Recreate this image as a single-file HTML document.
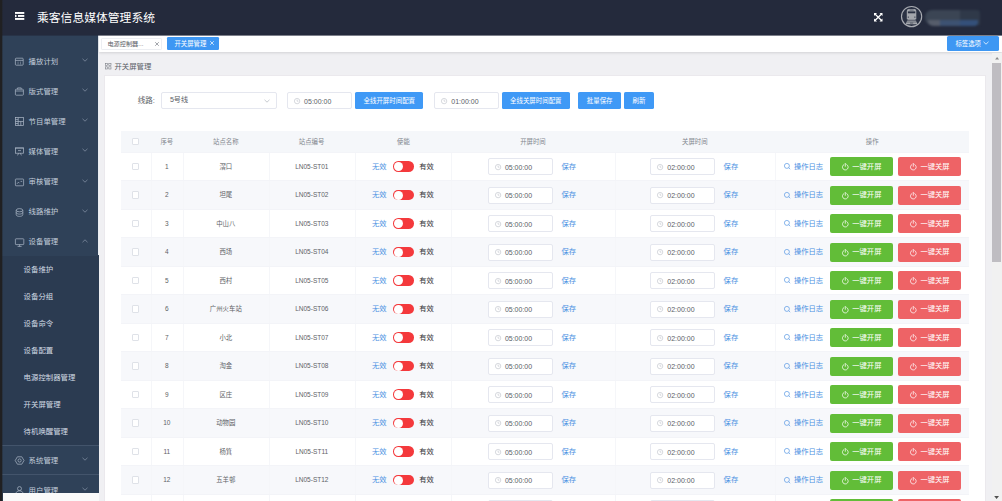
<!DOCTYPE html><html lang="zh-CN"><head><meta charset="utf-8"><title>乘客信息媒体管理系统</title><style>
*{box-sizing:border-box;margin:0;padding:0}
html,body{width:1002px;height:501px;overflow:hidden;background:#f0f0f3}
body{position:relative;font-family:"Liberation Sans", "Noto Sans CJK SC", sans-serif;color:#606266;font-size:6.4px;line-height:1}
.abs{position:absolute}
.t{position:absolute;white-space:nowrap;transform:translateY(-50%)}
.tc{position:absolute;white-space:nowrap;transform:translate(-50%,-50%)}
#hdr{position:absolute;left:0;top:0;width:1002px;height:35px;background:#242a3c}
#strip{position:absolute;left:0;top:0;width:3px;height:501px;background:linear-gradient(to right,#202022 0,#202022 2px,rgba(32,32,34,.35) 2px);z-index:9}
#side{position:absolute;left:0;top:35px;width:99.1px;height:466px;background:#2f4158;overflow:hidden}
#side .sub{position:absolute;left:0;width:99.1px;background:#2b3b51}
.mi{position:absolute;left:0;width:98.6px;color:#c3cedb;font-size:7.4px}
.mi .t{left:28.6px}
.si{position:absolute;left:0;width:98.6px;color:#d3dbe5;font-size:7.4px}
.si .t{left:23.6px}
#tabs{position:absolute;left:99.1px;top:35px;width:903px;height:16.7px;background:#fff;box-shadow:0 .8px 2.6px rgba(0,0,0,.13)}
.tab{position:absolute;top:2.6px;height:12px;border-radius:1.2px;font-size:6.2px}
#card{position:absolute;left:104px;top:75px;width:882px;height:430px;background:#fff;border:1px solid #ebe9ed}
.inp{position:absolute;background:#fff;border:0.55px solid #e5e7ef;border-radius:2px;color:#606266;font-size:6.8px}
.btn{position:absolute;background:#3f99f6;border-radius:1.6px;color:#fff;font-size:6.45px;text-align:center}
.row{position:absolute;left:120.8px;width:848.4px;height:28.5px;border-bottom:0.55px solid #f3f4f8}
.row.s{background:#f7f8fb}
.row.h{background:#f5f7fa;color:#83878e}
.vl{position:absolute;top:0;width:0.55px;height:100%;background:#f5f6f9}
.cb{position:absolute;width:7.2px;height:7.2px;border:0.55px solid #dfe2e8;border-radius:1px;background:#fff}
.lnk{color:#4a90e2;font-size:7.3px}
.tc.la{font-size:6.5px;transform:translate(-50%,-50%) scale(1,1.13)}
.t.la{transform:translateY(-50%) scale(1,1.12);transform-origin:0 50%}
.sw{position:absolute;width:21.4px;height:10.6px;border-radius:5.3px;background:#f4393c}
.sw:after{content:"";position:absolute;left:0.8px;top:0.8px;width:9px;height:9px;border-radius:50%;background:#fff}
.gb{position:absolute;height:19.4px;width:63px;border-radius:2px;color:#fff;font-size:7.3px}
svg{position:absolute;overflow:visible}
</style></head><body>
<div id="hdr">
<svg style="left:15px;top:12.1px" width="9.3" height="7.9" viewBox="0 0 9.3 7.9"><g fill="#fff"><rect x="0" y="0" width="9.3" height="1.9"/><rect x="3" y="3" width="6.3" height="1.9"/><rect x="0" y="6" width="9.3" height="1.9"/><path d="M0 2.5L2.3 3.95L0 5.4Z"/></g></svg>
<div class="t" style="left:37px;top:19.1px;color:#fff;font-size:11.8px">乘客信息媒体管理系统</div>
<svg style="left:874.4px;top:12.8px" width="8.5" height="8.5" viewBox="0 0 9 9"><g stroke="#fff" stroke-width="1.3" fill="none"><path d="M1 1L8 8M8 1L1 8"/></g><g fill="#fff"><path d="M0 0h3.2L0 3.2zM9 0v3.2L5.8 0zM0 9v-3.2L3.2 9zM9 9h-3.2L9 5.8z"/></g></svg>
<svg style="left:900.5px;top:6.2px" width="21.2" height="21.2" viewBox="0 0 21.2 21.2"><circle cx="10.6" cy="10.6" r="10.1" fill="#2a3143" stroke="#a9acb2" stroke-width="1.15"/><g fill="#a3a6ac"><path d="M7.8 3h5.5a2 2 0 0 1 2 2v8.2H5.8V5a2 2 0 0 1 2-2z"/><path d="M6.8 13.2h7.5l.5 1.1H6.3zM6 14.8h9.1l.4 1H5.6zM5.3 16.3h10.5l.5 1.9H4.8z"/></g><g fill="#2a3143"><rect x="6.9" y="5.4" width="7.4" height="1.9"/><rect x="8.5" y="3.7" width="4.2" height=".6"/><circle cx="7.3" cy="11.1" r=".65"/><circle cx="13.9" cy="11.1" r=".65"/><rect x="9" y="16.3" width="3.2" height="1.9" opacity=".35"/></g></svg>
<div class="abs" style="left:920px;top:5px;width:70px;height:26px;filter:blur(1px)"><div class="abs" style="left:5.2px;top:5.4px;width:36px;height:15px;background:#3b4554;border-radius:7px 0 0 7px"></div><div class="abs" style="left:40.4px;top:5px;width:19.6px;height:15.4px;background:#2f3949;border-radius:0 3px 0 0"></div><div class="abs" style="left:8px;top:14.6px;width:12px;height:6px;background:#565d6b;border-radius:0 0 0 5px"></div><div class="abs" style="left:19.7px;top:14.9px;width:20.3px;height:5.7px;background:#3d5272"></div><div class="abs" style="left:39.9px;top:14.9px;width:18.4px;height:5.7px;background:#34507a;border-radius:0 0 4px 0"></div></div>
</div>
<div id="side">
<div class="sub" style="top:221.4px;height:188.3px"></div>
<div class="mi" style="top:26.6px;height:0">
<svg style="left:14.7px;top:-4.5px" width="9" height="9" viewBox="0 0 9 9"><g fill="none" stroke="#aeb9c8" stroke-width=".7"><rect x=".4" y="1.2" width="7.8" height="7" rx=".8"/><path d="M.4 3.4h7.8"/><path d="M2.6 5.2h.9M5.1 5.2h.9M2.6 6.8h.9M5.1 6.8h.9" /></g></svg>
<div class="t" style="top:0">播放计划</div>
<svg style="left:85.2px;top:-1.5px" width="1" height="1"><path d="M-2.5 -1.2 L0 1.2 L2.5 -1.2" fill="none" stroke="#8492a6" stroke-width=".75"/></svg>
</div>
<div class="mi" style="top:56.7px;height:0">
<svg style="left:14.7px;top:-4.5px" width="9" height="9" viewBox="0 0 9 9"><g fill="none" stroke="#aeb9c8" stroke-width=".7"><rect x=".4" y="2.2" width="8" height="6" rx=".8"/><path d="M2.6 2.2V.9h3.6v1.3"/><path d="M.4 4h8"/></g></svg>
<div class="t" style="top:0">版式管理</div>
<svg style="left:85.2px;top:-1.5px" width="1" height="1"><path d="M-2.5 -1.2 L0 1.2 L2.5 -1.2" fill="none" stroke="#8492a6" stroke-width=".75"/></svg>
</div>
<div class="mi" style="top:86.8px;height:0">
<svg style="left:14.7px;top:-4.5px" width="9" height="9" viewBox="0 0 9 9"><g fill="none" stroke="#aeb9c8" stroke-width=".7"><rect x=".4" y=".6" width="8" height="7.8"/><path d="M3.2 .6v7.8M.4 4.5h8M5.8 4.5v3.9M.4 2.6h2.8M.4 6.5h2.8"/></g></svg>
<div class="t" style="top:0">节目单管理</div>
<svg style="left:85.2px;top:-1.5px" width="1" height="1"><path d="M-2.5 -1.2 L0 1.2 L2.5 -1.2" fill="none" stroke="#8492a6" stroke-width=".75"/></svg>
</div>
<div class="mi" style="top:116.9px;height:0">
<svg style="left:14.7px;top:-4.5px" width="9" height="9" viewBox="0 0 9 9"><g fill="none" stroke="#aeb9c8" stroke-width=".7"><rect x=".6" y="1" width="7.8" height="5.2"/><path d="M0 1h9M2.6 8.4l1-2.2M6.4 8.4l-1-2.2M3 3.6h3"/></g></svg>
<div class="t" style="top:0">媒体管理</div>
<svg style="left:85.2px;top:-1.5px" width="1" height="1"><path d="M-2.5 -1.2 L0 1.2 L2.5 -1.2" fill="none" stroke="#8492a6" stroke-width=".75"/></svg>
</div>
<div class="mi" style="top:147px;height:0">
<svg style="left:14.7px;top:-4.5px" width="9" height="9" viewBox="0 0 9 9"><g fill="none" stroke="#aeb9c8" stroke-width=".7"><rect x=".4" y="1" width="8.2" height="6.8" rx=".6"/><path d="M2 5.8l1.4-1.6 1 1M5.6 3.4h1.6"/></g></svg>
<div class="t" style="top:0">审核管理</div>
<svg style="left:85.2px;top:-1.5px" width="1" height="1"><path d="M-2.5 -1.2 L0 1.2 L2.5 -1.2" fill="none" stroke="#8492a6" stroke-width=".75"/></svg>
</div>
<div class="mi" style="top:177.1px;height:0">
<svg style="left:14.7px;top:-4.5px" width="9" height="9" viewBox="0 0 9 9"><g fill="none" stroke="#aeb9c8" stroke-width=".7"><ellipse cx="4.5" cy="2.2" rx="3.3" ry="1.6"/><path d="M1.2 2.2v4.6c0 .9 1.5 1.6 3.3 1.6s3.3-.7 3.3-1.6V2.2M1.2 4.5c0 .9 1.5 1.6 3.3 1.6s3.3-.7 3.3-1.6"/></g></svg>
<div class="t" style="top:0">线路维护</div>
<svg style="left:85.2px;top:-1.5px" width="1" height="1"><path d="M-2.5 -1.2 L0 1.2 L2.5 -1.2" fill="none" stroke="#8492a6" stroke-width=".75"/></svg>
</div>
<div class="mi" style="top:207.2px;height:0">
<svg style="left:14.7px;top:-4.5px" width="9" height="9" viewBox="0 0 9 9"><g fill="none" stroke="#aeb9c8" stroke-width=".7"><rect x=".4" y=".8" width="8.4" height="5.8" rx=".6"/><path d="M2.6 8.4h4M4.6 6.6v1.8"/></g></svg>
<div class="t" style="top:0">设备管理</div>
<svg style="left:85.2px;top:-1.5px" width="1" height="1"><path d="M-2.5 1.2 L0 -1.2 L2.5 1.2" fill="none" stroke="#8492a6" stroke-width=".75"/></svg>
</div>
<div class="si" style="top:235.35px;height:0"><div class="t" style="top:0">设备维护</div></div>
<div class="si" style="top:262.25px;height:0"><div class="t" style="top:0">设备分组</div></div>
<div class="si" style="top:289.15px;height:0"><div class="t" style="top:0">设备命令</div></div>
<div class="si" style="top:316.05px;height:0"><div class="t" style="top:0">设备配置</div></div>
<div class="si" style="top:342.95px;height:0"><div class="t" style="top:0">电源控制器管理</div></div>
<div class="si" style="top:369.85px;height:0"><div class="t" style="top:0">开关屏管理</div></div>
<div class="si" style="top:396.75px;height:0"><div class="t" style="top:0">待机唤醒管理</div></div>
<div class="abs" style="left:0;top:409.7px;width:98.6px;height:.55px;background:#43546b"></div>
<div class="mi" style="top:425.6px;height:0">
<svg style="left:14.7px;top:-4.5px" width="9" height="9" viewBox="0 0 9 9"><g fill="none" stroke="#aeb9c8" stroke-width=".7"><path d="M2.4.8h4.4l2.2 3.7-2.2 3.7H2.4L.2 4.5z"/><circle cx="4.6" cy="4.5" r="1.6"/></g></svg>
<div class="t" style="top:0">系统管理</div>
<svg style="left:85.2px;top:-1.5px" width="1" height="1"><path d="M-2.5 -1.2 L0 1.2 L2.5 -1.2" fill="none" stroke="#8492a6" stroke-width=".75"/></svg>
</div>
<div class="abs" style="left:0;top:439.4px;width:98.6px;height:.55px;background:#43546b"></div>
<div class="mi" style="top:455.6px;height:0">
<svg style="left:14.7px;top:-4.5px" width="9" height="9" viewBox="0 0 9 9"><g fill="none" stroke="#aeb9c8" stroke-width=".7"><circle cx="4.5" cy="2.6" r="2"/><path d="M.6 8.6c0-2.4 1.7-3.8 3.9-3.8s3.9 1.4 3.9 3.8"/></g></svg>
<div class="t" style="top:0">用户管理</div>
<svg style="left:85.2px;top:-1.5px" width="1" height="1"><path d="M-2.5 -1.2 L0 1.2 L2.5 -1.2" fill="none" stroke="#8492a6" stroke-width=".75"/></svg>
</div>
<div class="abs" style="left:98.1px;top:0;width:1.1px;height:220.3px;background:#e9edf2"></div>
<div class="abs" style="left:2.6px;top:458px;width:96px;height:9px;background:#fafafa"></div>
</div>
<div id="tabs">
<div class="tab" style="left:2.1px;width:61px;background:#fff;border:.55px solid #eceef2;color:#5a5e66"><div class="t" style="left:5.2px;top:5.8px">电源控制器...</div><svg style="left:55px;top:5.6px" width="1" height="1"><path d="M-1.8 -1.8L1.8 1.8M1.8 -1.8L-1.8 1.8" stroke="#7a7e86" stroke-width=".7" fill="none"/></svg></div>
<div class="tab" style="left:68.3px;top:2.2px;width:51.5px;height:12.6px;background:#3e97f3;color:#fff;font-size:6.36px"><div class="t" style="left:7.1px;top:6.4px">开关屏管理</div><svg style="left:45.1px;top:6.2px" width="1" height="1"><path d="M-1.8 -1.8L1.8 1.8M1.8 -1.8L-1.8 1.8" stroke="#fff" stroke-width=".7" fill="none"/></svg></div>
<div class="btn" style="left:848.1px;top:1.3px;width:51.8px;height:14.6px;background:#3e97f3;font-size:6.4px"><div class="t" style="left:8.2px;top:7.3px">标签选项</div><svg style="left:38.6px;top:7.2px" width="1" height="1"><path d="M-2.5 -1.2 L0 1.2 L2.5 -1.2" fill="none" stroke="#fff" stroke-width=".75"/></svg></div>
</div>
<svg style="left:105.3px;top:63.4px" width="6.4" height="6.4" viewBox="0 0 6.4 6.4"><g fill="none" stroke="#7a7e86" stroke-width=".6"><rect x=".3" y=".3" width="2.2" height="2.2"/><rect x="3.8" y=".3" width="2.2" height="2.2"/><rect x=".3" y="3.8" width="2.2" height="2.2"/><rect x="3.8" y="3.8" width="2.2" height="2.2"/></g></svg>
<div class="t" style="left:114.4px;top:66.8px;font-size:7.4px;color:#5a5e66">开关屏管理</div>
<div id="card"></div>
<div class="t" style="left:137.8px;top:101.3px;font-size:7.5px;color:#606266">线路:</div>
<div class="inp" style="left:161.3px;top:92.4px;width:115.3px;height:17px"></div>
<div class="t" style="left:169.9px;top:101.3px;font-size:7.1px;color:#5a5e66">5号线</div>
<svg style="left:267.4px;top:101.3px" width="1" height="1"><path d="M-2.5 -1.2 L0 1.2 L2.5 -1.2" fill="none" stroke="#b4b8c0" stroke-width=".75"/></svg>
<div class="inp" style="left:287.2px;top:92.4px;width:65.2px;height:17px"></div><svg style="left:293.9px;top:97.8px" width="6.2" height="6.2" viewBox="0 0 6.2 6.2"><g fill="none" stroke="#bcc0c8" stroke-width=".6"><circle cx="3.1" cy="3.1" r="2.7"/><path d="M3.1 1.5v1.7h1.3"/></g></svg><div class="t la" style="left:304.1px;top:101px;font-size:7px;color:#5a5e66">05:00:00</div>
<div class="btn" style="left:355.2px;top:92.4px;width:68.2px;height:17px"><div class="tc" style="left:50%;top:50%">全线开屏时间配置</div></div>
<div class="inp" style="left:434.4px;top:92.4px;width:64.2px;height:17px"></div><svg style="left:441.1px;top:97.8px" width="6.2" height="6.2" viewBox="0 0 6.2 6.2"><g fill="none" stroke="#bcc0c8" stroke-width=".6"><circle cx="3.1" cy="3.1" r="2.7"/><path d="M3.1 1.5v1.7h1.3"/></g></svg><div class="t la" style="left:451.3px;top:101px;font-size:7px;color:#5a5e66">01:00:00</div>
<div class="btn" style="left:501.5px;top:92.4px;width:68.6px;height:17px"><div class="tc" style="left:50%;top:50%">全线关屏时间配置</div></div>
<div class="btn" style="left:578.2px;top:92.4px;width:43px;height:17px"><div class="tc" style="left:50%;top:50%">批量保存</div></div>
<div class="btn" style="left:624.2px;top:92.4px;width:29.6px;height:17px"><div class="tc" style="left:50%;top:50%">刷新</div></div>
<div class="row h" style="top:130.5px;height:22px">
<div class="cb" style="left:11.5px;top:7.1px"></div>
<div class="tc" style="left:46px;top:11.3px">序号</div>
<div class="tc" style="left:105px;top:11.3px">站点名称</div>
<div class="tc" style="left:190.8px;top:11.3px">站点编号</div>
<div class="tc" style="left:282.6px;top:11.3px">使能</div>
<div class="tc" style="left:412.2px;top:11.3px">开屏时间</div>
<div class="tc" style="left:574px;top:11.3px">关屏时间</div>
<div class="tc" style="left:751.4px;top:11.3px">操作</div>
</div>
<div class="row" style="top:152.5px">
<div class="vl" style="left:29.9px"></div><div class="vl" style="left:62.2px"></div><div class="vl" style="left:147.8px"></div><div class="vl" style="left:233.9px"></div><div class="vl" style="left:330.4px"></div><div class="vl" style="left:494px"></div><div class="vl" style="left:654.4px"></div>
<div class="cb" style="left:11.2px;top:10.35px"></div>
<div class="tc la" style="left:46px;top:14.25px">1</div>
<div class="tc" style="left:105px;top:14.25px">滘口</div>
<div class="tc la" style="left:191px;top:14.25px">LN05-ST01</div>
<div class="t lnk" style="left:251.2px;top:14.25px">无效</div>
<div class="sw" style="left:272px;top:8.75px"></div>
<div class="t" style="left:298.4px;top:14.25px;font-size:7.3px;color:#303133">有效</div>
<div class="inp" style="left:367.2px;top:5.65px;width:64.6px;height:17.2px"></div><svg style="left:373.9px;top:11.15px" width="6.2" height="6.2" viewBox="0 0 6.2 6.2"><g fill="none" stroke="#bcc0c8" stroke-width=".6"><circle cx="3.1" cy="3.1" r="2.7"/><path d="M3.1 1.5v1.7h1.3"/></g></svg><div class="t la" style="left:384.1px;top:14.35px;font-size:7px;color:#5a5e66">05:00:00</div>
<div class="t lnk" style="left:440.6px;top:14.25px">保存</div>
<div class="inp" style="left:529.6px;top:5.65px;width:64.6px;height:17.2px"></div><svg style="left:536.3px;top:11.15px" width="6.2" height="6.2" viewBox="0 0 6.2 6.2"><g fill="none" stroke="#bcc0c8" stroke-width=".6"><circle cx="3.1" cy="3.1" r="2.7"/><path d="M3.1 1.5v1.7h1.3"/></g></svg><div class="t la" style="left:546.5px;top:14.35px;font-size:7px;color:#5a5e66">02:00:00</div>
<div class="t lnk" style="left:602.8px;top:14.25px">保存</div>
<svg style="left:663.2px;top:10.95px" width="6.6" height="6.6" viewBox="0 0 6.6 6.6"><g fill="none" stroke="#4a90e2" stroke-width=".65"><circle cx="2.9" cy="2.9" r="2.5"/><path d="M4.7 4.7l1.5 1.5"/></g></svg>
<div class="t lnk" style="left:673.2px;top:14.25px">操作日志</div>
<div class="gb" style="left:709.2px;top:4.55px;background:#62bd38"><svg style="left:11.8px;top:6.1px" width="6.6" height="6.8" viewBox="0 0 6.6 6.8"><g fill="none" stroke="#fff" stroke-width=".75" stroke-linecap="round"><path d="M1.9 1.5a2.9 2.9 0 1 0 2.8 0"/><path d="M3.3 .4v2.9"/></g></svg><div class="t" style="left:22.3px;top:9.7px">一键开屏</div></div>
<div class="gb" style="left:777.4px;top:4.55px;background:#ee6366"><svg style="left:11.8px;top:6.1px" width="6.6" height="6.8" viewBox="0 0 6.6 6.8"><g fill="none" stroke="#fff" stroke-width=".75" stroke-linecap="round"><path d="M1.9 1.5a2.9 2.9 0 1 0 2.8 0"/><path d="M3.3 .4v2.9"/></g></svg><div class="t" style="left:22.3px;top:9.7px">一键关屏</div></div>
</div>
<div class="row s" style="top:181px">
<div class="vl" style="left:29.9px"></div><div class="vl" style="left:62.2px"></div><div class="vl" style="left:147.8px"></div><div class="vl" style="left:233.9px"></div><div class="vl" style="left:330.4px"></div><div class="vl" style="left:494px"></div><div class="vl" style="left:654.4px"></div>
<div class="cb" style="left:11.2px;top:10.35px"></div>
<div class="tc la" style="left:46px;top:14.25px">2</div>
<div class="tc" style="left:105px;top:14.25px">坦尾</div>
<div class="tc la" style="left:191px;top:14.25px">LN05-ST02</div>
<div class="t lnk" style="left:251.2px;top:14.25px">无效</div>
<div class="sw" style="left:272px;top:8.75px"></div>
<div class="t" style="left:298.4px;top:14.25px;font-size:7.3px;color:#303133">有效</div>
<div class="inp" style="left:367.2px;top:5.65px;width:64.6px;height:17.2px"></div><svg style="left:373.9px;top:11.15px" width="6.2" height="6.2" viewBox="0 0 6.2 6.2"><g fill="none" stroke="#bcc0c8" stroke-width=".6"><circle cx="3.1" cy="3.1" r="2.7"/><path d="M3.1 1.5v1.7h1.3"/></g></svg><div class="t la" style="left:384.1px;top:14.35px;font-size:7px;color:#5a5e66">05:00:00</div>
<div class="t lnk" style="left:440.6px;top:14.25px">保存</div>
<div class="inp" style="left:529.6px;top:5.65px;width:64.6px;height:17.2px"></div><svg style="left:536.3px;top:11.15px" width="6.2" height="6.2" viewBox="0 0 6.2 6.2"><g fill="none" stroke="#bcc0c8" stroke-width=".6"><circle cx="3.1" cy="3.1" r="2.7"/><path d="M3.1 1.5v1.7h1.3"/></g></svg><div class="t la" style="left:546.5px;top:14.35px;font-size:7px;color:#5a5e66">02:00:00</div>
<div class="t lnk" style="left:602.8px;top:14.25px">保存</div>
<svg style="left:663.2px;top:10.95px" width="6.6" height="6.6" viewBox="0 0 6.6 6.6"><g fill="none" stroke="#4a90e2" stroke-width=".65"><circle cx="2.9" cy="2.9" r="2.5"/><path d="M4.7 4.7l1.5 1.5"/></g></svg>
<div class="t lnk" style="left:673.2px;top:14.25px">操作日志</div>
<div class="gb" style="left:709.2px;top:4.55px;background:#62bd38"><svg style="left:11.8px;top:6.1px" width="6.6" height="6.8" viewBox="0 0 6.6 6.8"><g fill="none" stroke="#fff" stroke-width=".75" stroke-linecap="round"><path d="M1.9 1.5a2.9 2.9 0 1 0 2.8 0"/><path d="M3.3 .4v2.9"/></g></svg><div class="t" style="left:22.3px;top:9.7px">一键开屏</div></div>
<div class="gb" style="left:777.4px;top:4.55px;background:#ee6366"><svg style="left:11.8px;top:6.1px" width="6.6" height="6.8" viewBox="0 0 6.6 6.8"><g fill="none" stroke="#fff" stroke-width=".75" stroke-linecap="round"><path d="M1.9 1.5a2.9 2.9 0 1 0 2.8 0"/><path d="M3.3 .4v2.9"/></g></svg><div class="t" style="left:22.3px;top:9.7px">一键关屏</div></div>
</div>
<div class="row" style="top:209.5px">
<div class="vl" style="left:29.9px"></div><div class="vl" style="left:62.2px"></div><div class="vl" style="left:147.8px"></div><div class="vl" style="left:233.9px"></div><div class="vl" style="left:330.4px"></div><div class="vl" style="left:494px"></div><div class="vl" style="left:654.4px"></div>
<div class="cb" style="left:11.2px;top:10.35px"></div>
<div class="tc la" style="left:46px;top:14.25px">3</div>
<div class="tc" style="left:105px;top:14.25px">中山八</div>
<div class="tc la" style="left:191px;top:14.25px">LN05-ST03</div>
<div class="t lnk" style="left:251.2px;top:14.25px">无效</div>
<div class="sw" style="left:272px;top:8.75px"></div>
<div class="t" style="left:298.4px;top:14.25px;font-size:7.3px;color:#303133">有效</div>
<div class="inp" style="left:367.2px;top:5.65px;width:64.6px;height:17.2px"></div><svg style="left:373.9px;top:11.15px" width="6.2" height="6.2" viewBox="0 0 6.2 6.2"><g fill="none" stroke="#bcc0c8" stroke-width=".6"><circle cx="3.1" cy="3.1" r="2.7"/><path d="M3.1 1.5v1.7h1.3"/></g></svg><div class="t la" style="left:384.1px;top:14.35px;font-size:7px;color:#5a5e66">05:00:00</div>
<div class="t lnk" style="left:440.6px;top:14.25px">保存</div>
<div class="inp" style="left:529.6px;top:5.65px;width:64.6px;height:17.2px"></div><svg style="left:536.3px;top:11.15px" width="6.2" height="6.2" viewBox="0 0 6.2 6.2"><g fill="none" stroke="#bcc0c8" stroke-width=".6"><circle cx="3.1" cy="3.1" r="2.7"/><path d="M3.1 1.5v1.7h1.3"/></g></svg><div class="t la" style="left:546.5px;top:14.35px;font-size:7px;color:#5a5e66">02:00:00</div>
<div class="t lnk" style="left:602.8px;top:14.25px">保存</div>
<svg style="left:663.2px;top:10.95px" width="6.6" height="6.6" viewBox="0 0 6.6 6.6"><g fill="none" stroke="#4a90e2" stroke-width=".65"><circle cx="2.9" cy="2.9" r="2.5"/><path d="M4.7 4.7l1.5 1.5"/></g></svg>
<div class="t lnk" style="left:673.2px;top:14.25px">操作日志</div>
<div class="gb" style="left:709.2px;top:4.55px;background:#62bd38"><svg style="left:11.8px;top:6.1px" width="6.6" height="6.8" viewBox="0 0 6.6 6.8"><g fill="none" stroke="#fff" stroke-width=".75" stroke-linecap="round"><path d="M1.9 1.5a2.9 2.9 0 1 0 2.8 0"/><path d="M3.3 .4v2.9"/></g></svg><div class="t" style="left:22.3px;top:9.7px">一键开屏</div></div>
<div class="gb" style="left:777.4px;top:4.55px;background:#ee6366"><svg style="left:11.8px;top:6.1px" width="6.6" height="6.8" viewBox="0 0 6.6 6.8"><g fill="none" stroke="#fff" stroke-width=".75" stroke-linecap="round"><path d="M1.9 1.5a2.9 2.9 0 1 0 2.8 0"/><path d="M3.3 .4v2.9"/></g></svg><div class="t" style="left:22.3px;top:9.7px">一键关屏</div></div>
</div>
<div class="row s" style="top:238px">
<div class="vl" style="left:29.9px"></div><div class="vl" style="left:62.2px"></div><div class="vl" style="left:147.8px"></div><div class="vl" style="left:233.9px"></div><div class="vl" style="left:330.4px"></div><div class="vl" style="left:494px"></div><div class="vl" style="left:654.4px"></div>
<div class="cb" style="left:11.2px;top:10.35px"></div>
<div class="tc la" style="left:46px;top:14.25px">4</div>
<div class="tc" style="left:105px;top:14.25px">西场</div>
<div class="tc la" style="left:191px;top:14.25px">LN05-ST04</div>
<div class="t lnk" style="left:251.2px;top:14.25px">无效</div>
<div class="sw" style="left:272px;top:8.75px"></div>
<div class="t" style="left:298.4px;top:14.25px;font-size:7.3px;color:#303133">有效</div>
<div class="inp" style="left:367.2px;top:5.65px;width:64.6px;height:17.2px"></div><svg style="left:373.9px;top:11.15px" width="6.2" height="6.2" viewBox="0 0 6.2 6.2"><g fill="none" stroke="#bcc0c8" stroke-width=".6"><circle cx="3.1" cy="3.1" r="2.7"/><path d="M3.1 1.5v1.7h1.3"/></g></svg><div class="t la" style="left:384.1px;top:14.35px;font-size:7px;color:#5a5e66">05:00:00</div>
<div class="t lnk" style="left:440.6px;top:14.25px">保存</div>
<div class="inp" style="left:529.6px;top:5.65px;width:64.6px;height:17.2px"></div><svg style="left:536.3px;top:11.15px" width="6.2" height="6.2" viewBox="0 0 6.2 6.2"><g fill="none" stroke="#bcc0c8" stroke-width=".6"><circle cx="3.1" cy="3.1" r="2.7"/><path d="M3.1 1.5v1.7h1.3"/></g></svg><div class="t la" style="left:546.5px;top:14.35px;font-size:7px;color:#5a5e66">02:00:00</div>
<div class="t lnk" style="left:602.8px;top:14.25px">保存</div>
<svg style="left:663.2px;top:10.95px" width="6.6" height="6.6" viewBox="0 0 6.6 6.6"><g fill="none" stroke="#4a90e2" stroke-width=".65"><circle cx="2.9" cy="2.9" r="2.5"/><path d="M4.7 4.7l1.5 1.5"/></g></svg>
<div class="t lnk" style="left:673.2px;top:14.25px">操作日志</div>
<div class="gb" style="left:709.2px;top:4.55px;background:#62bd38"><svg style="left:11.8px;top:6.1px" width="6.6" height="6.8" viewBox="0 0 6.6 6.8"><g fill="none" stroke="#fff" stroke-width=".75" stroke-linecap="round"><path d="M1.9 1.5a2.9 2.9 0 1 0 2.8 0"/><path d="M3.3 .4v2.9"/></g></svg><div class="t" style="left:22.3px;top:9.7px">一键开屏</div></div>
<div class="gb" style="left:777.4px;top:4.55px;background:#ee6366"><svg style="left:11.8px;top:6.1px" width="6.6" height="6.8" viewBox="0 0 6.6 6.8"><g fill="none" stroke="#fff" stroke-width=".75" stroke-linecap="round"><path d="M1.9 1.5a2.9 2.9 0 1 0 2.8 0"/><path d="M3.3 .4v2.9"/></g></svg><div class="t" style="left:22.3px;top:9.7px">一键关屏</div></div>
</div>
<div class="row" style="top:266.5px">
<div class="vl" style="left:29.9px"></div><div class="vl" style="left:62.2px"></div><div class="vl" style="left:147.8px"></div><div class="vl" style="left:233.9px"></div><div class="vl" style="left:330.4px"></div><div class="vl" style="left:494px"></div><div class="vl" style="left:654.4px"></div>
<div class="cb" style="left:11.2px;top:10.35px"></div>
<div class="tc la" style="left:46px;top:14.25px">5</div>
<div class="tc" style="left:105px;top:14.25px">西村</div>
<div class="tc la" style="left:191px;top:14.25px">LN05-ST05</div>
<div class="t lnk" style="left:251.2px;top:14.25px">无效</div>
<div class="sw" style="left:272px;top:8.75px"></div>
<div class="t" style="left:298.4px;top:14.25px;font-size:7.3px;color:#303133">有效</div>
<div class="inp" style="left:367.2px;top:5.65px;width:64.6px;height:17.2px"></div><svg style="left:373.9px;top:11.15px" width="6.2" height="6.2" viewBox="0 0 6.2 6.2"><g fill="none" stroke="#bcc0c8" stroke-width=".6"><circle cx="3.1" cy="3.1" r="2.7"/><path d="M3.1 1.5v1.7h1.3"/></g></svg><div class="t la" style="left:384.1px;top:14.35px;font-size:7px;color:#5a5e66">05:00:00</div>
<div class="t lnk" style="left:440.6px;top:14.25px">保存</div>
<div class="inp" style="left:529.6px;top:5.65px;width:64.6px;height:17.2px"></div><svg style="left:536.3px;top:11.15px" width="6.2" height="6.2" viewBox="0 0 6.2 6.2"><g fill="none" stroke="#bcc0c8" stroke-width=".6"><circle cx="3.1" cy="3.1" r="2.7"/><path d="M3.1 1.5v1.7h1.3"/></g></svg><div class="t la" style="left:546.5px;top:14.35px;font-size:7px;color:#5a5e66">02:00:00</div>
<div class="t lnk" style="left:602.8px;top:14.25px">保存</div>
<svg style="left:663.2px;top:10.95px" width="6.6" height="6.6" viewBox="0 0 6.6 6.6"><g fill="none" stroke="#4a90e2" stroke-width=".65"><circle cx="2.9" cy="2.9" r="2.5"/><path d="M4.7 4.7l1.5 1.5"/></g></svg>
<div class="t lnk" style="left:673.2px;top:14.25px">操作日志</div>
<div class="gb" style="left:709.2px;top:4.55px;background:#62bd38"><svg style="left:11.8px;top:6.1px" width="6.6" height="6.8" viewBox="0 0 6.6 6.8"><g fill="none" stroke="#fff" stroke-width=".75" stroke-linecap="round"><path d="M1.9 1.5a2.9 2.9 0 1 0 2.8 0"/><path d="M3.3 .4v2.9"/></g></svg><div class="t" style="left:22.3px;top:9.7px">一键开屏</div></div>
<div class="gb" style="left:777.4px;top:4.55px;background:#ee6366"><svg style="left:11.8px;top:6.1px" width="6.6" height="6.8" viewBox="0 0 6.6 6.8"><g fill="none" stroke="#fff" stroke-width=".75" stroke-linecap="round"><path d="M1.9 1.5a2.9 2.9 0 1 0 2.8 0"/><path d="M3.3 .4v2.9"/></g></svg><div class="t" style="left:22.3px;top:9.7px">一键关屏</div></div>
</div>
<div class="row s" style="top:295px">
<div class="vl" style="left:29.9px"></div><div class="vl" style="left:62.2px"></div><div class="vl" style="left:147.8px"></div><div class="vl" style="left:233.9px"></div><div class="vl" style="left:330.4px"></div><div class="vl" style="left:494px"></div><div class="vl" style="left:654.4px"></div>
<div class="cb" style="left:11.2px;top:10.35px"></div>
<div class="tc la" style="left:46px;top:14.25px">6</div>
<div class="tc" style="left:105px;top:14.25px">广州火车站</div>
<div class="tc la" style="left:191px;top:14.25px">LN05-ST06</div>
<div class="t lnk" style="left:251.2px;top:14.25px">无效</div>
<div class="sw" style="left:272px;top:8.75px"></div>
<div class="t" style="left:298.4px;top:14.25px;font-size:7.3px;color:#303133">有效</div>
<div class="inp" style="left:367.2px;top:5.65px;width:64.6px;height:17.2px"></div><svg style="left:373.9px;top:11.15px" width="6.2" height="6.2" viewBox="0 0 6.2 6.2"><g fill="none" stroke="#bcc0c8" stroke-width=".6"><circle cx="3.1" cy="3.1" r="2.7"/><path d="M3.1 1.5v1.7h1.3"/></g></svg><div class="t la" style="left:384.1px;top:14.35px;font-size:7px;color:#5a5e66">05:00:00</div>
<div class="t lnk" style="left:440.6px;top:14.25px">保存</div>
<div class="inp" style="left:529.6px;top:5.65px;width:64.6px;height:17.2px"></div><svg style="left:536.3px;top:11.15px" width="6.2" height="6.2" viewBox="0 0 6.2 6.2"><g fill="none" stroke="#bcc0c8" stroke-width=".6"><circle cx="3.1" cy="3.1" r="2.7"/><path d="M3.1 1.5v1.7h1.3"/></g></svg><div class="t la" style="left:546.5px;top:14.35px;font-size:7px;color:#5a5e66">02:00:00</div>
<div class="t lnk" style="left:602.8px;top:14.25px">保存</div>
<svg style="left:663.2px;top:10.95px" width="6.6" height="6.6" viewBox="0 0 6.6 6.6"><g fill="none" stroke="#4a90e2" stroke-width=".65"><circle cx="2.9" cy="2.9" r="2.5"/><path d="M4.7 4.7l1.5 1.5"/></g></svg>
<div class="t lnk" style="left:673.2px;top:14.25px">操作日志</div>
<div class="gb" style="left:709.2px;top:4.55px;background:#62bd38"><svg style="left:11.8px;top:6.1px" width="6.6" height="6.8" viewBox="0 0 6.6 6.8"><g fill="none" stroke="#fff" stroke-width=".75" stroke-linecap="round"><path d="M1.9 1.5a2.9 2.9 0 1 0 2.8 0"/><path d="M3.3 .4v2.9"/></g></svg><div class="t" style="left:22.3px;top:9.7px">一键开屏</div></div>
<div class="gb" style="left:777.4px;top:4.55px;background:#ee6366"><svg style="left:11.8px;top:6.1px" width="6.6" height="6.8" viewBox="0 0 6.6 6.8"><g fill="none" stroke="#fff" stroke-width=".75" stroke-linecap="round"><path d="M1.9 1.5a2.9 2.9 0 1 0 2.8 0"/><path d="M3.3 .4v2.9"/></g></svg><div class="t" style="left:22.3px;top:9.7px">一键关屏</div></div>
</div>
<div class="row" style="top:323.5px">
<div class="vl" style="left:29.9px"></div><div class="vl" style="left:62.2px"></div><div class="vl" style="left:147.8px"></div><div class="vl" style="left:233.9px"></div><div class="vl" style="left:330.4px"></div><div class="vl" style="left:494px"></div><div class="vl" style="left:654.4px"></div>
<div class="cb" style="left:11.2px;top:10.35px"></div>
<div class="tc la" style="left:46px;top:14.25px">7</div>
<div class="tc" style="left:105px;top:14.25px">小北</div>
<div class="tc la" style="left:191px;top:14.25px">LN05-ST07</div>
<div class="t lnk" style="left:251.2px;top:14.25px">无效</div>
<div class="sw" style="left:272px;top:8.75px"></div>
<div class="t" style="left:298.4px;top:14.25px;font-size:7.3px;color:#303133">有效</div>
<div class="inp" style="left:367.2px;top:5.65px;width:64.6px;height:17.2px"></div><svg style="left:373.9px;top:11.15px" width="6.2" height="6.2" viewBox="0 0 6.2 6.2"><g fill="none" stroke="#bcc0c8" stroke-width=".6"><circle cx="3.1" cy="3.1" r="2.7"/><path d="M3.1 1.5v1.7h1.3"/></g></svg><div class="t la" style="left:384.1px;top:14.35px;font-size:7px;color:#5a5e66">05:00:00</div>
<div class="t lnk" style="left:440.6px;top:14.25px">保存</div>
<div class="inp" style="left:529.6px;top:5.65px;width:64.6px;height:17.2px"></div><svg style="left:536.3px;top:11.15px" width="6.2" height="6.2" viewBox="0 0 6.2 6.2"><g fill="none" stroke="#bcc0c8" stroke-width=".6"><circle cx="3.1" cy="3.1" r="2.7"/><path d="M3.1 1.5v1.7h1.3"/></g></svg><div class="t la" style="left:546.5px;top:14.35px;font-size:7px;color:#5a5e66">02:00:00</div>
<div class="t lnk" style="left:602.8px;top:14.25px">保存</div>
<svg style="left:663.2px;top:10.95px" width="6.6" height="6.6" viewBox="0 0 6.6 6.6"><g fill="none" stroke="#4a90e2" stroke-width=".65"><circle cx="2.9" cy="2.9" r="2.5"/><path d="M4.7 4.7l1.5 1.5"/></g></svg>
<div class="t lnk" style="left:673.2px;top:14.25px">操作日志</div>
<div class="gb" style="left:709.2px;top:4.55px;background:#62bd38"><svg style="left:11.8px;top:6.1px" width="6.6" height="6.8" viewBox="0 0 6.6 6.8"><g fill="none" stroke="#fff" stroke-width=".75" stroke-linecap="round"><path d="M1.9 1.5a2.9 2.9 0 1 0 2.8 0"/><path d="M3.3 .4v2.9"/></g></svg><div class="t" style="left:22.3px;top:9.7px">一键开屏</div></div>
<div class="gb" style="left:777.4px;top:4.55px;background:#ee6366"><svg style="left:11.8px;top:6.1px" width="6.6" height="6.8" viewBox="0 0 6.6 6.8"><g fill="none" stroke="#fff" stroke-width=".75" stroke-linecap="round"><path d="M1.9 1.5a2.9 2.9 0 1 0 2.8 0"/><path d="M3.3 .4v2.9"/></g></svg><div class="t" style="left:22.3px;top:9.7px">一键关屏</div></div>
</div>
<div class="row s" style="top:352px">
<div class="vl" style="left:29.9px"></div><div class="vl" style="left:62.2px"></div><div class="vl" style="left:147.8px"></div><div class="vl" style="left:233.9px"></div><div class="vl" style="left:330.4px"></div><div class="vl" style="left:494px"></div><div class="vl" style="left:654.4px"></div>
<div class="cb" style="left:11.2px;top:10.35px"></div>
<div class="tc la" style="left:46px;top:14.25px">8</div>
<div class="tc" style="left:105px;top:14.25px">淘金</div>
<div class="tc la" style="left:191px;top:14.25px">LN05-ST08</div>
<div class="t lnk" style="left:251.2px;top:14.25px">无效</div>
<div class="sw" style="left:272px;top:8.75px"></div>
<div class="t" style="left:298.4px;top:14.25px;font-size:7.3px;color:#303133">有效</div>
<div class="inp" style="left:367.2px;top:5.65px;width:64.6px;height:17.2px"></div><svg style="left:373.9px;top:11.15px" width="6.2" height="6.2" viewBox="0 0 6.2 6.2"><g fill="none" stroke="#bcc0c8" stroke-width=".6"><circle cx="3.1" cy="3.1" r="2.7"/><path d="M3.1 1.5v1.7h1.3"/></g></svg><div class="t la" style="left:384.1px;top:14.35px;font-size:7px;color:#5a5e66">05:00:00</div>
<div class="t lnk" style="left:440.6px;top:14.25px">保存</div>
<div class="inp" style="left:529.6px;top:5.65px;width:64.6px;height:17.2px"></div><svg style="left:536.3px;top:11.15px" width="6.2" height="6.2" viewBox="0 0 6.2 6.2"><g fill="none" stroke="#bcc0c8" stroke-width=".6"><circle cx="3.1" cy="3.1" r="2.7"/><path d="M3.1 1.5v1.7h1.3"/></g></svg><div class="t la" style="left:546.5px;top:14.35px;font-size:7px;color:#5a5e66">02:00:00</div>
<div class="t lnk" style="left:602.8px;top:14.25px">保存</div>
<svg style="left:663.2px;top:10.95px" width="6.6" height="6.6" viewBox="0 0 6.6 6.6"><g fill="none" stroke="#4a90e2" stroke-width=".65"><circle cx="2.9" cy="2.9" r="2.5"/><path d="M4.7 4.7l1.5 1.5"/></g></svg>
<div class="t lnk" style="left:673.2px;top:14.25px">操作日志</div>
<div class="gb" style="left:709.2px;top:4.55px;background:#62bd38"><svg style="left:11.8px;top:6.1px" width="6.6" height="6.8" viewBox="0 0 6.6 6.8"><g fill="none" stroke="#fff" stroke-width=".75" stroke-linecap="round"><path d="M1.9 1.5a2.9 2.9 0 1 0 2.8 0"/><path d="M3.3 .4v2.9"/></g></svg><div class="t" style="left:22.3px;top:9.7px">一键开屏</div></div>
<div class="gb" style="left:777.4px;top:4.55px;background:#ee6366"><svg style="left:11.8px;top:6.1px" width="6.6" height="6.8" viewBox="0 0 6.6 6.8"><g fill="none" stroke="#fff" stroke-width=".75" stroke-linecap="round"><path d="M1.9 1.5a2.9 2.9 0 1 0 2.8 0"/><path d="M3.3 .4v2.9"/></g></svg><div class="t" style="left:22.3px;top:9.7px">一键关屏</div></div>
</div>
<div class="row" style="top:380.5px">
<div class="vl" style="left:29.9px"></div><div class="vl" style="left:62.2px"></div><div class="vl" style="left:147.8px"></div><div class="vl" style="left:233.9px"></div><div class="vl" style="left:330.4px"></div><div class="vl" style="left:494px"></div><div class="vl" style="left:654.4px"></div>
<div class="cb" style="left:11.2px;top:10.35px"></div>
<div class="tc la" style="left:46px;top:14.25px">9</div>
<div class="tc" style="left:105px;top:14.25px">区庄</div>
<div class="tc la" style="left:191px;top:14.25px">LN05-ST09</div>
<div class="t lnk" style="left:251.2px;top:14.25px">无效</div>
<div class="sw" style="left:272px;top:8.75px"></div>
<div class="t" style="left:298.4px;top:14.25px;font-size:7.3px;color:#303133">有效</div>
<div class="inp" style="left:367.2px;top:5.65px;width:64.6px;height:17.2px"></div><svg style="left:373.9px;top:11.15px" width="6.2" height="6.2" viewBox="0 0 6.2 6.2"><g fill="none" stroke="#bcc0c8" stroke-width=".6"><circle cx="3.1" cy="3.1" r="2.7"/><path d="M3.1 1.5v1.7h1.3"/></g></svg><div class="t la" style="left:384.1px;top:14.35px;font-size:7px;color:#5a5e66">05:00:00</div>
<div class="t lnk" style="left:440.6px;top:14.25px">保存</div>
<div class="inp" style="left:529.6px;top:5.65px;width:64.6px;height:17.2px"></div><svg style="left:536.3px;top:11.15px" width="6.2" height="6.2" viewBox="0 0 6.2 6.2"><g fill="none" stroke="#bcc0c8" stroke-width=".6"><circle cx="3.1" cy="3.1" r="2.7"/><path d="M3.1 1.5v1.7h1.3"/></g></svg><div class="t la" style="left:546.5px;top:14.35px;font-size:7px;color:#5a5e66">02:00:00</div>
<div class="t lnk" style="left:602.8px;top:14.25px">保存</div>
<svg style="left:663.2px;top:10.95px" width="6.6" height="6.6" viewBox="0 0 6.6 6.6"><g fill="none" stroke="#4a90e2" stroke-width=".65"><circle cx="2.9" cy="2.9" r="2.5"/><path d="M4.7 4.7l1.5 1.5"/></g></svg>
<div class="t lnk" style="left:673.2px;top:14.25px">操作日志</div>
<div class="gb" style="left:709.2px;top:4.55px;background:#62bd38"><svg style="left:11.8px;top:6.1px" width="6.6" height="6.8" viewBox="0 0 6.6 6.8"><g fill="none" stroke="#fff" stroke-width=".75" stroke-linecap="round"><path d="M1.9 1.5a2.9 2.9 0 1 0 2.8 0"/><path d="M3.3 .4v2.9"/></g></svg><div class="t" style="left:22.3px;top:9.7px">一键开屏</div></div>
<div class="gb" style="left:777.4px;top:4.55px;background:#ee6366"><svg style="left:11.8px;top:6.1px" width="6.6" height="6.8" viewBox="0 0 6.6 6.8"><g fill="none" stroke="#fff" stroke-width=".75" stroke-linecap="round"><path d="M1.9 1.5a2.9 2.9 0 1 0 2.8 0"/><path d="M3.3 .4v2.9"/></g></svg><div class="t" style="left:22.3px;top:9.7px">一键关屏</div></div>
</div>
<div class="row s" style="top:409px">
<div class="vl" style="left:29.9px"></div><div class="vl" style="left:62.2px"></div><div class="vl" style="left:147.8px"></div><div class="vl" style="left:233.9px"></div><div class="vl" style="left:330.4px"></div><div class="vl" style="left:494px"></div><div class="vl" style="left:654.4px"></div>
<div class="cb" style="left:11.2px;top:10.35px"></div>
<div class="tc la" style="left:46px;top:14.25px">10</div>
<div class="tc" style="left:105px;top:14.25px">动物园</div>
<div class="tc la" style="left:191px;top:14.25px">LN05-ST10</div>
<div class="t lnk" style="left:251.2px;top:14.25px">无效</div>
<div class="sw" style="left:272px;top:8.75px"></div>
<div class="t" style="left:298.4px;top:14.25px;font-size:7.3px;color:#303133">有效</div>
<div class="inp" style="left:367.2px;top:5.65px;width:64.6px;height:17.2px"></div><svg style="left:373.9px;top:11.15px" width="6.2" height="6.2" viewBox="0 0 6.2 6.2"><g fill="none" stroke="#bcc0c8" stroke-width=".6"><circle cx="3.1" cy="3.1" r="2.7"/><path d="M3.1 1.5v1.7h1.3"/></g></svg><div class="t la" style="left:384.1px;top:14.35px;font-size:7px;color:#5a5e66">05:00:00</div>
<div class="t lnk" style="left:440.6px;top:14.25px">保存</div>
<div class="inp" style="left:529.6px;top:5.65px;width:64.6px;height:17.2px"></div><svg style="left:536.3px;top:11.15px" width="6.2" height="6.2" viewBox="0 0 6.2 6.2"><g fill="none" stroke="#bcc0c8" stroke-width=".6"><circle cx="3.1" cy="3.1" r="2.7"/><path d="M3.1 1.5v1.7h1.3"/></g></svg><div class="t la" style="left:546.5px;top:14.35px;font-size:7px;color:#5a5e66">02:00:00</div>
<div class="t lnk" style="left:602.8px;top:14.25px">保存</div>
<svg style="left:663.2px;top:10.95px" width="6.6" height="6.6" viewBox="0 0 6.6 6.6"><g fill="none" stroke="#4a90e2" stroke-width=".65"><circle cx="2.9" cy="2.9" r="2.5"/><path d="M4.7 4.7l1.5 1.5"/></g></svg>
<div class="t lnk" style="left:673.2px;top:14.25px">操作日志</div>
<div class="gb" style="left:709.2px;top:4.55px;background:#62bd38"><svg style="left:11.8px;top:6.1px" width="6.6" height="6.8" viewBox="0 0 6.6 6.8"><g fill="none" stroke="#fff" stroke-width=".75" stroke-linecap="round"><path d="M1.9 1.5a2.9 2.9 0 1 0 2.8 0"/><path d="M3.3 .4v2.9"/></g></svg><div class="t" style="left:22.3px;top:9.7px">一键开屏</div></div>
<div class="gb" style="left:777.4px;top:4.55px;background:#ee6366"><svg style="left:11.8px;top:6.1px" width="6.6" height="6.8" viewBox="0 0 6.6 6.8"><g fill="none" stroke="#fff" stroke-width=".75" stroke-linecap="round"><path d="M1.9 1.5a2.9 2.9 0 1 0 2.8 0"/><path d="M3.3 .4v2.9"/></g></svg><div class="t" style="left:22.3px;top:9.7px">一键关屏</div></div>
</div>
<div class="row" style="top:437.5px">
<div class="vl" style="left:29.9px"></div><div class="vl" style="left:62.2px"></div><div class="vl" style="left:147.8px"></div><div class="vl" style="left:233.9px"></div><div class="vl" style="left:330.4px"></div><div class="vl" style="left:494px"></div><div class="vl" style="left:654.4px"></div>
<div class="cb" style="left:11.2px;top:10.35px"></div>
<div class="tc la" style="left:46px;top:14.25px">11</div>
<div class="tc" style="left:105px;top:14.25px">杨箕</div>
<div class="tc la" style="left:191px;top:14.25px">LN05-ST11</div>
<div class="t lnk" style="left:251.2px;top:14.25px">无效</div>
<div class="sw" style="left:272px;top:8.75px"></div>
<div class="t" style="left:298.4px;top:14.25px;font-size:7.3px;color:#303133">有效</div>
<div class="inp" style="left:367.2px;top:5.65px;width:64.6px;height:17.2px"></div><svg style="left:373.9px;top:11.15px" width="6.2" height="6.2" viewBox="0 0 6.2 6.2"><g fill="none" stroke="#bcc0c8" stroke-width=".6"><circle cx="3.1" cy="3.1" r="2.7"/><path d="M3.1 1.5v1.7h1.3"/></g></svg><div class="t la" style="left:384.1px;top:14.35px;font-size:7px;color:#5a5e66">05:00:00</div>
<div class="t lnk" style="left:440.6px;top:14.25px">保存</div>
<div class="inp" style="left:529.6px;top:5.65px;width:64.6px;height:17.2px"></div><svg style="left:536.3px;top:11.15px" width="6.2" height="6.2" viewBox="0 0 6.2 6.2"><g fill="none" stroke="#bcc0c8" stroke-width=".6"><circle cx="3.1" cy="3.1" r="2.7"/><path d="M3.1 1.5v1.7h1.3"/></g></svg><div class="t la" style="left:546.5px;top:14.35px;font-size:7px;color:#5a5e66">02:00:00</div>
<div class="t lnk" style="left:602.8px;top:14.25px">保存</div>
<svg style="left:663.2px;top:10.95px" width="6.6" height="6.6" viewBox="0 0 6.6 6.6"><g fill="none" stroke="#4a90e2" stroke-width=".65"><circle cx="2.9" cy="2.9" r="2.5"/><path d="M4.7 4.7l1.5 1.5"/></g></svg>
<div class="t lnk" style="left:673.2px;top:14.25px">操作日志</div>
<div class="gb" style="left:709.2px;top:4.55px;background:#62bd38"><svg style="left:11.8px;top:6.1px" width="6.6" height="6.8" viewBox="0 0 6.6 6.8"><g fill="none" stroke="#fff" stroke-width=".75" stroke-linecap="round"><path d="M1.9 1.5a2.9 2.9 0 1 0 2.8 0"/><path d="M3.3 .4v2.9"/></g></svg><div class="t" style="left:22.3px;top:9.7px">一键开屏</div></div>
<div class="gb" style="left:777.4px;top:4.55px;background:#ee6366"><svg style="left:11.8px;top:6.1px" width="6.6" height="6.8" viewBox="0 0 6.6 6.8"><g fill="none" stroke="#fff" stroke-width=".75" stroke-linecap="round"><path d="M1.9 1.5a2.9 2.9 0 1 0 2.8 0"/><path d="M3.3 .4v2.9"/></g></svg><div class="t" style="left:22.3px;top:9.7px">一键关屏</div></div>
</div>
<div class="row s" style="top:466px">
<div class="vl" style="left:29.9px"></div><div class="vl" style="left:62.2px"></div><div class="vl" style="left:147.8px"></div><div class="vl" style="left:233.9px"></div><div class="vl" style="left:330.4px"></div><div class="vl" style="left:494px"></div><div class="vl" style="left:654.4px"></div>
<div class="cb" style="left:11.2px;top:10.35px"></div>
<div class="tc la" style="left:46px;top:14.25px">12</div>
<div class="tc" style="left:105px;top:14.25px">五羊邨</div>
<div class="tc la" style="left:191px;top:14.25px">LN05-ST12</div>
<div class="t lnk" style="left:251.2px;top:14.25px">无效</div>
<div class="sw" style="left:272px;top:8.75px"></div>
<div class="t" style="left:298.4px;top:14.25px;font-size:7.3px;color:#303133">有效</div>
<div class="inp" style="left:367.2px;top:5.65px;width:64.6px;height:17.2px"></div><svg style="left:373.9px;top:11.15px" width="6.2" height="6.2" viewBox="0 0 6.2 6.2"><g fill="none" stroke="#bcc0c8" stroke-width=".6"><circle cx="3.1" cy="3.1" r="2.7"/><path d="M3.1 1.5v1.7h1.3"/></g></svg><div class="t la" style="left:384.1px;top:14.35px;font-size:7px;color:#5a5e66">05:00:00</div>
<div class="t lnk" style="left:440.6px;top:14.25px">保存</div>
<div class="inp" style="left:529.6px;top:5.65px;width:64.6px;height:17.2px"></div><svg style="left:536.3px;top:11.15px" width="6.2" height="6.2" viewBox="0 0 6.2 6.2"><g fill="none" stroke="#bcc0c8" stroke-width=".6"><circle cx="3.1" cy="3.1" r="2.7"/><path d="M3.1 1.5v1.7h1.3"/></g></svg><div class="t la" style="left:546.5px;top:14.35px;font-size:7px;color:#5a5e66">02:00:00</div>
<div class="t lnk" style="left:602.8px;top:14.25px">保存</div>
<svg style="left:663.2px;top:10.95px" width="6.6" height="6.6" viewBox="0 0 6.6 6.6"><g fill="none" stroke="#4a90e2" stroke-width=".65"><circle cx="2.9" cy="2.9" r="2.5"/><path d="M4.7 4.7l1.5 1.5"/></g></svg>
<div class="t lnk" style="left:673.2px;top:14.25px">操作日志</div>
<div class="gb" style="left:709.2px;top:4.55px;background:#62bd38"><svg style="left:11.8px;top:6.1px" width="6.6" height="6.8" viewBox="0 0 6.6 6.8"><g fill="none" stroke="#fff" stroke-width=".75" stroke-linecap="round"><path d="M1.9 1.5a2.9 2.9 0 1 0 2.8 0"/><path d="M3.3 .4v2.9"/></g></svg><div class="t" style="left:22.3px;top:9.7px">一键开屏</div></div>
<div class="gb" style="left:777.4px;top:4.55px;background:#ee6366"><svg style="left:11.8px;top:6.1px" width="6.6" height="6.8" viewBox="0 0 6.6 6.8"><g fill="none" stroke="#fff" stroke-width=".75" stroke-linecap="round"><path d="M1.9 1.5a2.9 2.9 0 1 0 2.8 0"/><path d="M3.3 .4v2.9"/></g></svg><div class="t" style="left:22.3px;top:9.7px">一键关屏</div></div>
</div>
<div class="row" style="top:494.5px">
<div class="vl" style="left:29.9px"></div><div class="vl" style="left:62.2px"></div><div class="vl" style="left:147.8px"></div><div class="vl" style="left:233.9px"></div><div class="vl" style="left:330.4px"></div><div class="vl" style="left:494px"></div><div class="vl" style="left:654.4px"></div>
<div class="cb" style="left:11.2px;top:10.35px"></div>
<div class="tc la" style="left:46px;top:14.25px">13</div>
<div class="tc" style="left:105px;top:14.25px">珠江新城</div>
<div class="tc la" style="left:191px;top:14.25px">LN05-ST13</div>
<div class="t lnk" style="left:251.2px;top:14.25px">无效</div>
<div class="sw" style="left:272px;top:8.75px"></div>
<div class="t" style="left:298.4px;top:14.25px;font-size:7.3px;color:#303133">有效</div>
<div class="inp" style="left:367.2px;top:5.65px;width:64.6px;height:17.2px"></div><svg style="left:373.9px;top:11.15px" width="6.2" height="6.2" viewBox="0 0 6.2 6.2"><g fill="none" stroke="#bcc0c8" stroke-width=".6"><circle cx="3.1" cy="3.1" r="2.7"/><path d="M3.1 1.5v1.7h1.3"/></g></svg><div class="t la" style="left:384.1px;top:14.35px;font-size:7px;color:#5a5e66">05:00:00</div>
<div class="t lnk" style="left:440.6px;top:14.25px">保存</div>
<div class="inp" style="left:529.6px;top:5.65px;width:64.6px;height:17.2px"></div><svg style="left:536.3px;top:11.15px" width="6.2" height="6.2" viewBox="0 0 6.2 6.2"><g fill="none" stroke="#bcc0c8" stroke-width=".6"><circle cx="3.1" cy="3.1" r="2.7"/><path d="M3.1 1.5v1.7h1.3"/></g></svg><div class="t la" style="left:546.5px;top:14.35px;font-size:7px;color:#5a5e66">02:00:00</div>
<div class="t lnk" style="left:602.8px;top:14.25px">保存</div>
<svg style="left:663.2px;top:10.95px" width="6.6" height="6.6" viewBox="0 0 6.6 6.6"><g fill="none" stroke="#4a90e2" stroke-width=".65"><circle cx="2.9" cy="2.9" r="2.5"/><path d="M4.7 4.7l1.5 1.5"/></g></svg>
<div class="t lnk" style="left:673.2px;top:14.25px">操作日志</div>
<div class="gb" style="left:709.2px;top:4.55px;background:#62bd38"><svg style="left:11.8px;top:6.1px" width="6.6" height="6.8" viewBox="0 0 6.6 6.8"><g fill="none" stroke="#fff" stroke-width=".75" stroke-linecap="round"><path d="M1.9 1.5a2.9 2.9 0 1 0 2.8 0"/><path d="M3.3 .4v2.9"/></g></svg><div class="t" style="left:22.3px;top:9.7px">一键开屏</div></div>
<div class="gb" style="left:777.4px;top:4.55px;background:#ee6366"><svg style="left:11.8px;top:6.1px" width="6.6" height="6.8" viewBox="0 0 6.6 6.8"><g fill="none" stroke="#fff" stroke-width=".75" stroke-linecap="round"><path d="M1.9 1.5a2.9 2.9 0 1 0 2.8 0"/><path d="M3.3 .4v2.9"/></g></svg><div class="t" style="left:22.3px;top:9.7px">一键关屏</div></div>
</div>
<div class="abs" style="left:992.2px;top:53px;width:9.8px;height:448px;background:#f1f1f1"></div>
<div class="abs" style="left:992.1px;top:63px;width:8.8px;height:199.2px;background:#bfbdc2"></div>
<svg style="left:994.8px;top:56.9px" width="4.2" height="2.4" viewBox="0 0 5 3"><path d="M0 3L2.5 0L5 3z" fill="#8a8a8a"/></svg>
<svg style="left:993.9px;top:496.1px" width="5.2" height="2.9" viewBox="0 0 5 3"><path d="M0 0L2.5 3L5 0z" fill="#505050"/></svg>
<div class="abs" style="left:0;top:35px;width:1002px;height:1px;background:rgba(36,42,60,.6)"></div>
<div id="strip"></div>
</body></html>
